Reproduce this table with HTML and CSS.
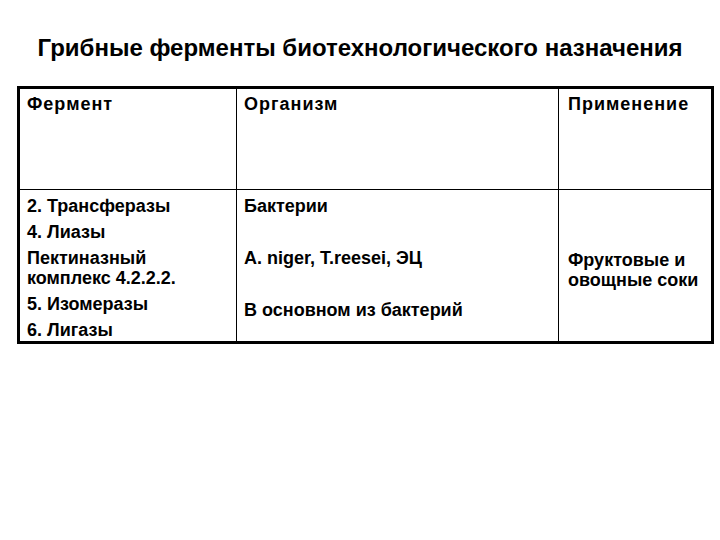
FILE: index.html
```html
<!DOCTYPE html>
<html lang="ru">
<head>
<meta charset="utf-8">
<link rel="stylesheet" href="styles.css">
</head>
<body>
<h1 class="title">Грибные ферменты биотехнологического назначения</h1>
<table class="grid">
  <colgroup>
    <col class="c1">
    <col class="c2">
    <col class="c3">
  </colgroup>
  <tr class="head">
    <td>Фермент</td>
    <td>Организм</td>
    <td class="last">Применение</td>
  </tr>
  <tr class="body">
    <td>
      <p>2. Трансферазы</p>
      <p>4. Лиазы</p>
      <p>Пектиназный<br>комплекс 4.2.2.2.</p>
      <p>5. Изомеразы</p>
      <p>6. Лигазы</p>
    </td>
    <td>
      <p>Бактерии</p>
      <p>&nbsp;</p>
      <p>A. niger, T.reesei, ЭЦ</p>
      <p>&nbsp;</p>
      <p>В основном из бактерий</p>
    </td>
    <td class="mid last">
      <p>Фруктовые и<br>овощные соки</p>
    </td>
  </tr>
</table>
</body>
</html>
```
FILE: styles.css
```css
html, body {
  margin: 0;
  padding: 0;
  background: #ffffff;
}
body {
  width: 720px;
  height: 540px;
  font-family: "Liberation Sans", Arial, sans-serif;
  color: #000;
}
.title {
  margin: 0;
  padding-top: 34px;
  height: 86px;
  box-sizing: border-box;
  text-align: center;
  font-size: 24px;
  font-weight: bold;
  line-height: 28px;
}
.grid {
  margin-left: 17px;
  width: 694px;
  border-collapse: collapse;
  table-layout: fixed;
  border: 3px solid #000;
  font-size: 18px;
  font-weight: bold;
}
.c1 { width: 218px; }
.c2 { width: 322px; }
.c3 { width: 154px; }
.grid td {
  border: 1px solid #000;
  vertical-align: top;
  padding: 5px 6px 0 7px;
  line-height: 20px;
}
.grid td.last { padding-left: 9px; }
.head td { height: 95px; letter-spacing: 1px; }
.body td { padding-top: 6px; padding-bottom: 1px; }
.grid p { margin: 0 0 6px 0; }
.grid p:last-child { margin-bottom: 0; }
.grid .mid { vertical-align: middle; padding-top: 10px; }
```
